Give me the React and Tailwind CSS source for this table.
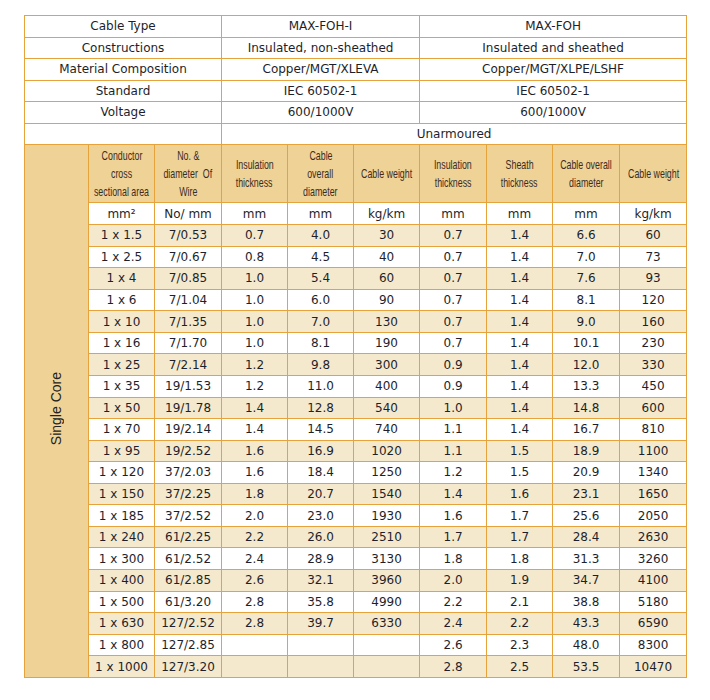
import React from 'react';

const specRows = [
    ['Cable Type', 'MAX-FOH-I', 'MAX-FOH'],
    ['Constructions', 'Insulated, non-sheathed', 'Insulated and sheathed'],
    ['Material Composition', 'Copper/MGT/XLEVA', 'Copper/MGT/XLPE/LSHF'],
    ['Standard', 'IEC 60502-1', 'IEC 60502-1'],
    ['Voltage', '600/1000V', '600/1000V'],
];

const headers = [
    ['Conductor', 'cross', 'sectional area'],
    ['No. &', 'diameter  Of', 'Wire'],
    ['Insulation', 'thickness'],
    ['Cable', 'overall', 'diameter'],
    ['Cable weight'],
    ['Insulation', 'thickness'],
    ['Sheath', 'thickness'],
    ['Cable overall', 'diameter'],
    ['Cable weight'],
];

const units = ['mm²', 'No/ mm', 'mm', 'mm', 'kg/km', 'mm', 'mm', 'mm', 'kg/km'];

const data = [
    ['1 x 1.5', '7/0.53', '0.7', '4.0', '30', '0.7', '1.4', '6.6', '60'],
    ['1 x 2.5', '7/0.67', '0.8', '4.5', '40', '0.7', '1.4', '7.0', '73'],
    ['1 x 4', '7/0.85', '1.0', '5.4', '60', '0.7', '1.4', '7.6', '93'],
    ['1 x 6', '7/1.04', '1.0', '6.0', '90', '0.7', '1.4', '8.1', '120'],
    ['1 x 10', '7/1.35', '1.0', '7.0', '130', '0.7', '1.4', '9.0', '160'],
    ['1 x 16', '7/1.70', '1.0', '8.1', '190', '0.7', '1.4', '10.1', '230'],
    ['1 x 25', '7/2.14', '1.2', '9.8', '300', '0.9', '1.4', '12.0', '330'],
    ['1 x 35', '19/1.53', '1.2', '11.0', '400', '0.9', '1.4', '13.3', '450'],
    ['1 x 50', '19/1.78', '1.4', '12.8', '540', '1.0', '1.4', '14.8', '600'],
    ['1 x 70', '19/2.14', '1.4', '14.5', '740', '1.1', '1.4', '16.7', '810'],
    ['1 x 95', '19/2.52', '1.6', '16.9', '1020', '1.1', '1.5', '18.9', '1100'],
    ['1 x 120', '37/2.03', '1.6', '18.4', '1250', '1.2', '1.5', '20.9', '1340'],
    ['1 x 150', '37/2.25', '1.8', '20.7', '1540', '1.4', '1.6', '23.1', '1650'],
    ['1 x 185', '37/2.52', '2.0', '23.0', '1930', '1.6', '1.7', '25.6', '2050'],
    ['1 x 240', '61/2.25', '2.2', '26.0', '2510', '1.7', '1.7', '28.4', '2630'],
    ['1 x 300', '61/2.52', '2.4', '28.9', '3130', '1.8', '1.8', '31.3', '3260'],
    ['1 x 400', '61/2.85', '2.6', '32.1', '3960', '2.0', '1.9', '34.7', '4100'],
    ['1 x 500', '61/3.20', '2.8', '35.8', '4990', '2.2', '2.1', '38.8', '5180'],
    ['1 x 630', '127/2.52', '2.8', '39.7', '6330', '2.4', '2.2', '43.3', '6590'],
    ['1 x 800', '127/2.85', '', '', '', '2.6', '2.3', '48.0', '8300'],
    ['1 x 1000', '127/3.20', '', '', '', '2.8', '2.5', '53.5', '10470'],
];

const cell = 'border border-[#e6a33c] p-0 text-center align-middle whitespace-nowrap';

const App = () => {
    return (
        <div className="bg-white min-h-[700px] pt-[15px] pl-[24px] font-['DejaVu_Sans',sans-serif] text-[12px] text-[#1e1f2b]">
            <table className="border-collapse table-fixed w-[663px]">
                <colgroup>
                    <col className="w-[64px]" />
                    <col className="w-[66px]" />
                    <col className="w-[67px]" />
                    <col className="w-[66px]" />
                    <col className="w-[66px]" />
                    <col className="w-[66px]" />
                    <col className="w-[67px]" />
                    <col className="w-[66px]" />
                    <col className="w-[67px]" />
                    <col className="w-[67px]" />
                </colgroup>
                <tbody>
                    {specRows.map((row, i) => (
                        <tr key={i} className="h-[21.5px]">
                            <td colSpan={3} className={cell}>{row[0]}</td>
                            <td colSpan={3} className={cell}>{row[1]}</td>
                            <td colSpan={4} className={cell}>{row[2]}</td>
                        </tr>
                    ))}
                    <tr className="h-[21.5px]">
                        <td colSpan={3} className={cell}></td>
                        <td colSpan={7} className={cell}>Unarmoured</td>
                    </tr>

                    {/* header */}
                    <tr className="h-[58px] bg-[#eed296]">
                        <td rowSpan={23} className={cell}>
                            <span className="inline-block [writing-mode:vertical-rl] rotate-180 font-['Liberation_Sans',sans-serif] text-[14px] text-[#222]">
                                Single Core
                            </span>
                        </td>
                        {headers.map((lines, i) => (
                            <td key={i} className={`${cell} font-['Liberation_Sans',sans-serif] text-[13px] leading-[18px] text-[#3d2c24]`}>
                                <div className="flex flex-col items-center">
                                    {lines.map((l, j) => (
                                        <span key={j} className="whitespace-pre scale-x-[0.68]">{l}</span>
                                    ))}
                                </div>
                            </td>
                        ))}
                    </tr>
                    <tr className="h-[22px] bg-white">
                        {units.map((u, i) => (
                            <td key={i} className={cell}>{u}</td>
                        ))}
                    </tr>
                    {data.map((row, i) => (
                        <tr key={i} className={`h-[21.57px] ${i % 2 === 0 ? 'bg-[#f5e9cd]' : 'bg-white'}`}>
                            {row.map((v, j) => (
                                <td key={j} className={cell}>{v}</td>
                            ))}
                        </tr>
                    ))}
                </tbody>
            </table>
        </div>
    );
};

export default App;
